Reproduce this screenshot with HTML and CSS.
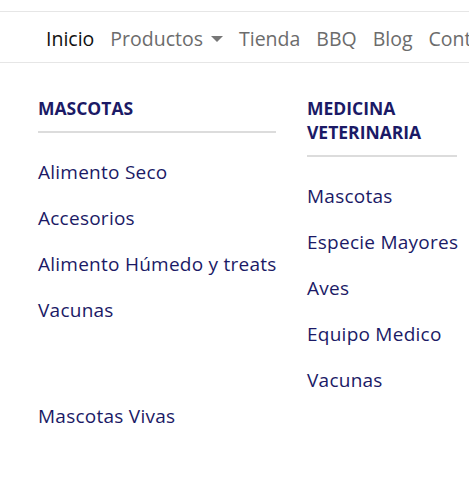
FILE: index.html
```html
<!DOCTYPE html>
<html lang="es">
<head>
  <meta charset="UTF-8">
  <meta name="viewport" content="width=device-width, initial-scale=1.0">
  <title>Productos</title>
  <link rel="stylesheet" href="styles.css">
</head>
<body>
  <header class="navbar">
    <ul class="nav">
      <li><a class="active" href="#">Inicio</a></li>
      <li><a href="#">Productos <span class="caret"></span></a></li>
      <li><a href="#">Tienda</a></li>
      <li><a href="#">BBQ</a></li>
      <li><a href="#">Blog</a></li>
      <li><a href="#">Contacto</a></li>
    </ul>
  </header>

  <div class="mega-menu">
    <div class="col col-left">
      <h4>MASCOTAS</h4>
      <a href="#">Alimento Seco</a>
      <a href="#">Accesorios</a>
      <a href="#">Alimento Húmedo y treats</a>
      <a href="#">Vacunas</a>
      <a class="group-start" href="#">Mascotas Vivas</a>
    </div>
    <div class="col col-right">
      <h4>MEDICINA VETERINARIA</h4>
      <a href="#">Mascotas</a>
      <a href="#">Especie Mayores</a>
      <a href="#">Aves</a>
      <a href="#">Equipo Medico</a>
      <a href="#">Vacunas</a>
    </div>
  </div>
</body>
</html>
```

FILE: styles.css
```css
body {
  margin: 0;
  font-family: "Open Sans", "Noto Sans", sans-serif;
  background-color: white;
  overflow: hidden;
}
.navbar {
  margin-top: 11px;
  height: 50px;
  border-top: 1px solid #e6e6e6;
  border-bottom: 1px solid #e6e6e6;
  overflow: hidden;
}
.nav {
  list-style: none;
  margin: 0;
  padding: 2px 0 0 46px;
  display: flex;
  align-items: center;
  height: 48px;
  gap: 16px;
  white-space: nowrap;
}
.nav a {
  color: #6c6c6c;
  text-decoration: none;
  font-size: 19.5px;
  display: flex;
  align-items: center;
}
.nav a.active {
  color: #111;
}
.caret {
  display: inline-block;
  margin-left: 8px;
  margin-top: 2px;
  border-left: 6px solid transparent;
  border-right: 6px solid transparent;
  border-top: 6px solid #777;
}
.mega-menu {
  display: flex;
  gap: 31px;
  padding: 33px 0 0 38px;
}
.col {
  display: flex;
  flex-direction: column;
}
.col-left {
  width: 238px;
}
.col-right {
  width: 150px;
}
.col h4 {
  margin: 0;
  font-size: 17.5px;
  line-height: 24px;
  font-weight: bold;
  color: #1b1a66;
  padding-bottom: 11px;
  border-bottom: 2px solid #dcdcdc;
  margin-bottom: 16px;
}
.col a {
  color: #1b1a66;
  text-decoration: none;
  font-size: 19px;
  letter-spacing: 0.25px;
  line-height: 46px;
  white-space: nowrap;
}
.col a.group-start {
  margin-top: 60px;
}
```
